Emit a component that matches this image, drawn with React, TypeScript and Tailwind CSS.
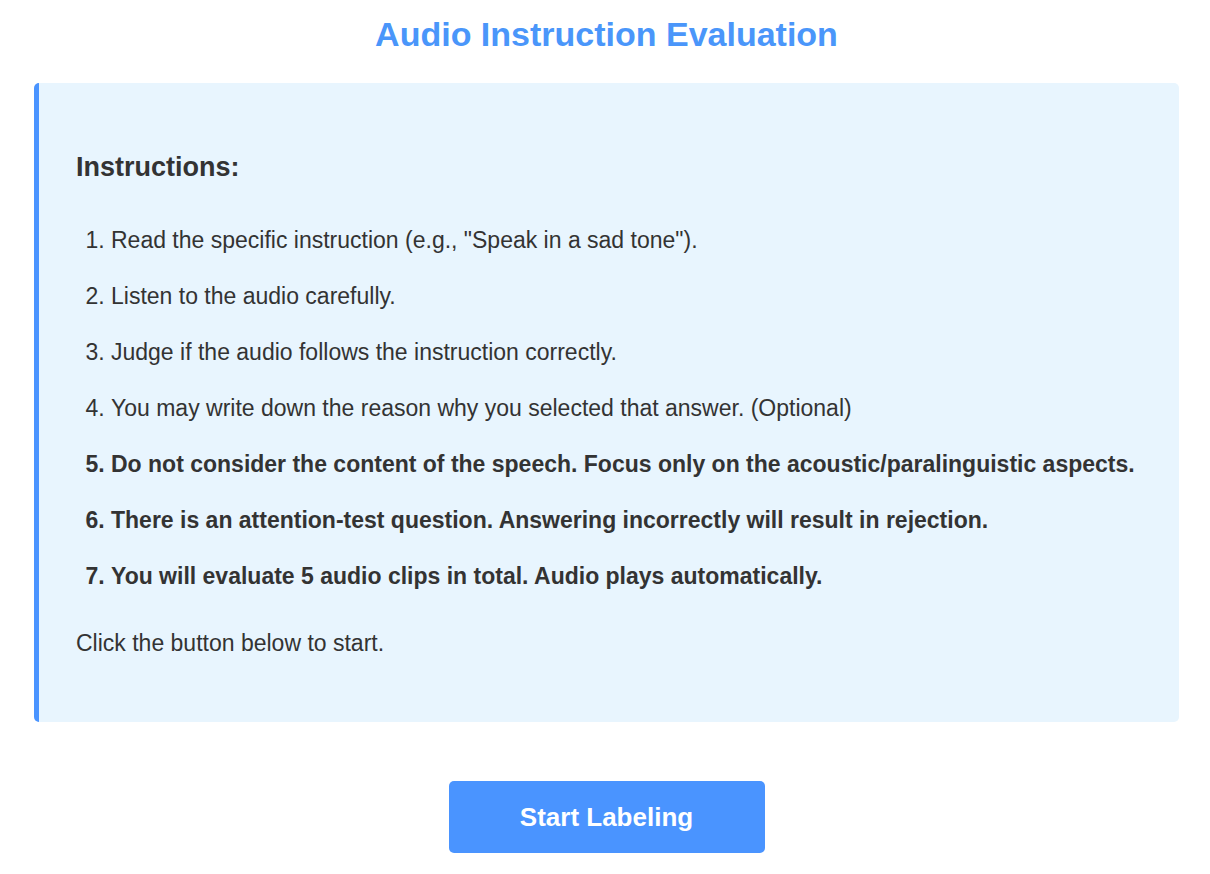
const items: { text: string; bold?: boolean }[] = [
  { text: 'Read the specific instruction (e.g., "Speak in a sad tone").' },
  { text: "Listen to the audio carefully." },
  { text: "Judge if the audio follows the instruction correctly." },
  { text: "You may write down the reason why you selected that answer. (Optional)" },
  {
    text: "Do not consider the content of the speech. Focus only on the acoustic/paralinguistic aspects.",
    bold: true,
  },
  { text: "There is an attention-test question. Answering incorrectly will result in rejection.", bold: true },
  { text: "You will evaluate 5 audio clips in total. Audio plays automatically.", bold: true },
];

export default function App() {
  return (
    <div className="min-h-screen bg-white font-['Liberation_Sans',Arial,sans-serif] text-[#333]">
      <div className="pl-[34px] pr-[31px] pt-[15px]">
        <h1 className="text-center text-[34px] leading-[38px] font-bold text-[#4a96fa]">
          Audio Instruction Evaluation
        </h1>

        {/* Instructions panel */}
        <div className="mt-[30px] rounded-[5px] border-l-[5px] border-[#4a94ff] bg-[#e8f5fe] pl-[37px] pr-[40px] pt-[70px] pb-[61px]">
          <h3 className="text-[27px] leading-[28px] font-bold mb-[41px]">Instructions:</h3>
          <ol className="list-decimal pl-[35px] space-y-[20px] text-[23px] leading-[36px]">
            {items.map((item, i) => (
              <li key={i} className={item.bold ? "font-bold" : ""}>
                {item.text}
              </li>
            ))}
          </ol>
          <p className="mt-[31px] text-[23px] leading-[36px]">Click the button below to start.</p>
        </div>

        <div className="flex justify-center mt-[59px]">
          <button className="w-[316px] h-[72px] rounded-[5px] bg-[#4a94ff] text-white text-[26px] font-bold">
            Start Labeling
          </button>
        </div>
      </div>
    </div>
  );
}
